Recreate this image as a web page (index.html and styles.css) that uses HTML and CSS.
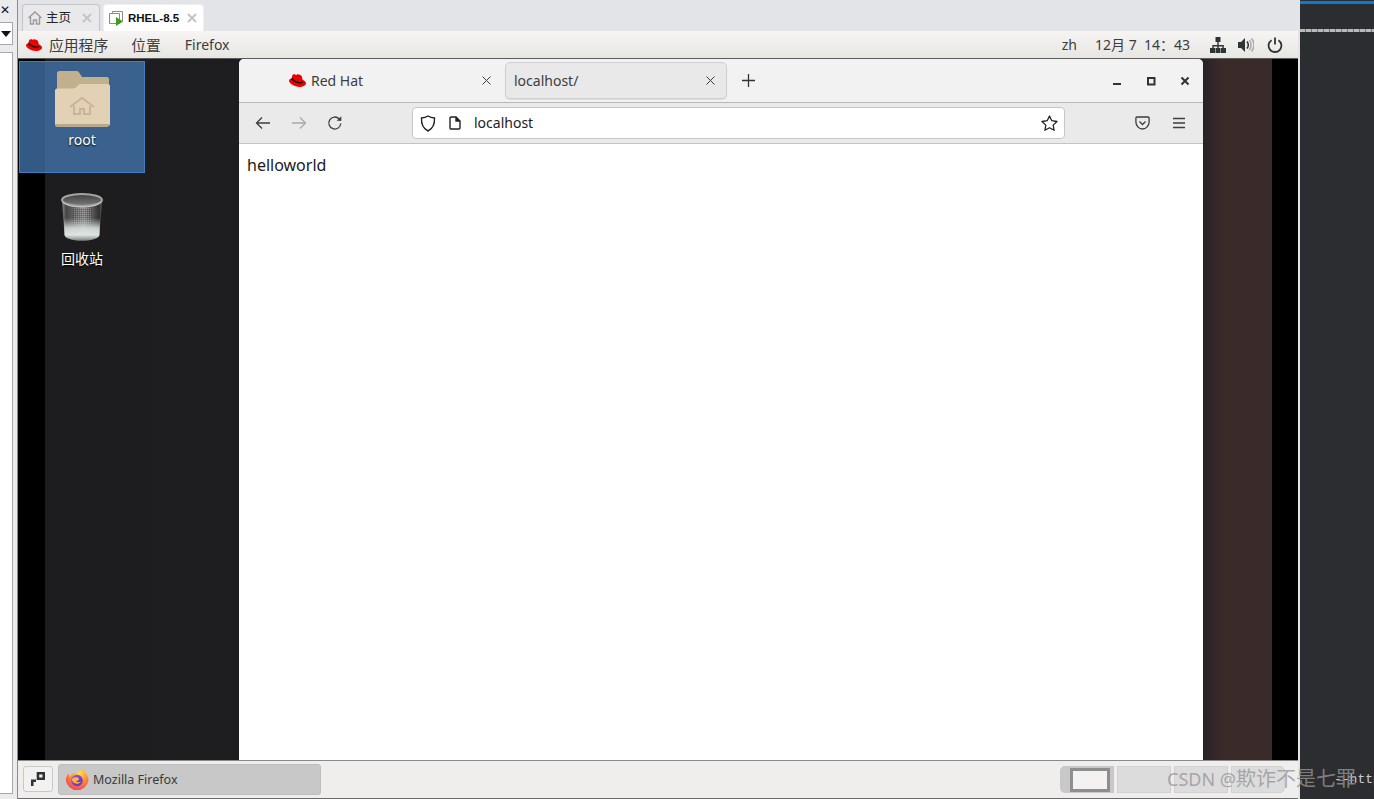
FILE: index.html
```html
<!DOCTYPE html>
<html lang="zh">
<head>
<meta charset="utf-8">
<title>RHEL-8.5</title>
<link rel="stylesheet" href="styles.css">
</head>
<body>
<div class="app">
  <aside class="left">
    <div class="left-close">✕</div>
    <div class="left-combo"><svg width="10" height="6" viewBox="0 0 10 6"><path d="M0 0h10L5 6z" fill="#111"/></svg></div>
    <div class="left-list"></div>
  </aside>

  <main class="vm">
    <div class="vm-tabs">
      <div class="vm-tab">
        <svg class="vm-tab-icon" width="16" height="16" viewBox="0 0 16 16" fill="none" stroke="#9a9a9a" stroke-width="1.4"><path d="M1.500 8 8 2l6.500 6M3.500 7v7h3v-4h3v4h3V7"/></svg>
        <span class="vm-tab-name">主页</span>
        <svg class="vm-tab-x" width="10" height="10" viewBox="0 0 10 10" stroke="#c4c4c4" stroke-width="2"><path d="M1 1l8 8M9 1l-8 8"/></svg>
      </div>
      <div class="vm-tab vm-tab-on">
        <svg class="vm-tab-icon" width="16" height="16" viewBox="0 0 16 16" fill="none"><path d="M4.500 3V1.500h10v10H13" stroke="#8a8a8a"/><path d="M1.500 3.500h10v10h-10z" stroke="#8a8a8a" fill="#fff"/><path d="M8 7l7 4.500-7 4.500z" fill="#3f9c1c"/></svg>
        <span class="vm-tab-name vm-tab-bold">RHEL-8.5</span>
        <svg class="vm-tab-x" width="10" height="10" viewBox="0 0 10 10" stroke="#c4c4c4" stroke-width="2"><path d="M1 1l8 8M9 1l-8 8"/></svg>
      </div>
    </div>

    <div class="guest">
      <header class="topbar">
        <svg class="hat" width="16" height="12" viewBox="0 0 16 12"><path d="M3 1.500C3.500.5 4.500 0 5.300.2c.7.2 1.300.6 1.700.6.500 0 .8-.6 1.300-.6 1.500.2 3.300 1 3.800 2l.7 3C14.500 6 16 7 16 8.500 16 10.500 13 12 10 12 5 12 0 8.700 0 6.300 0 5 1.300 4.500 2.500 4.200z" fill="#e00"/><path d="M2.700 3.400c1.500 2 5 4 8 4 1 0 2-.2 2.300-1l.4 1c-.6 1-1.700 1.400-3 1.400-3.500 0-7-2.200-8.300-4z" fill="#111"/></svg>
        <span class="top-item top-cjk top-first">应用程序</span>
        <span class="top-item top-cjk top-second">位置</span>
        <span class="top-item">Firefox</span>
        <span class="top-spacer"></span>
        <span class="top-item top-zh">zh</span>
        <span class="top-item top-clock">12月 7&nbsp; 14：43</span>
        <svg class="tray tray-net" width="16" height="16" viewBox="0 0 16 16" fill="#2e3436"><path d="M5.500 0h5v5h-5zM7.300 5h1.400v3h5.100v3h-1.400V9.400H8.700V11H7.300V9.400H3.700V11H2.300V8h5z"/><path d="M0 11h5v5H0zM5.500 11h5v5h-5zM11 11h5v5h-5z"/></svg>
        <svg class="tray tray-vol" width="16" height="16" viewBox="0 0 16 16"><path d="M0 5h3l4-4v14l-4-4H0z" fill="#2e3436"/><path d="M9 4.500c1.500 2 1.500 5 0 7" fill="none" stroke="#2e3436" stroke-width="1.500"/><path d="M11.300 3c2.200 3 2.200 7 0 10M13.600 1.500c3 4 3 9 0 13" fill="none" stroke="#a8a8a8" stroke-width="1.500"/></svg>
        <svg class="tray tray-pow" width="16" height="16" viewBox="0 0 16 16" fill="none" stroke="#2e3436" stroke-width="1.800"><path d="M4.600 3.200a6.400 6.400 0 1 0 6.800 0"/><path d="M8 .5v7"/></svg>
      </header>

      <section class="desktop">
        <div class="desk-icon desk-root">
          <svg width="56" height="58" viewBox="0 0 56 58">
            <path d="M3 3.500C3 2 4 1 5.500 1h17c1 0 2 .5 2.600 1.500L28 7h25c1 0 2 1 2 2v36H3z" fill="#c2b08d"/>
            <path d="M1 20.500c0-1 1-2 2-2h16c2 0 3-.7 4-2s2-2.500 4-2.500h27c1 0 2 1 2 2v38c0 1-1 2-2 2H3c-1 0-2-1-2-2z" fill="#e2d1b4"/>
            <path d="M1 54v1c0 1 1 2 2 2h50c1 0 2-1 2-2v-1z" fill="#b9a98c"/>
            <path d="M16 37l12-9 12 9M20 36v8h6v-5h4v5h6v-8" fill="none" stroke="#c8b596" stroke-width="2"/>
          </svg>
          <span class="desk-label">root</span>
        </div>
        <div class="desk-icon desk-trash">
          <svg width="44" height="50" viewBox="0 0 44 50">
            <defs>
              <linearGradient id="can" x1="0" y1="0" x2="1" y2="0"><stop offset="0" stop-color="#8a8a8a"/><stop offset=".1" stop-color="#454545"/><stop offset=".35" stop-color="#6c6c6c"/><stop offset=".55" stop-color="#8a8a8a"/><stop offset=".78" stop-color="#545454"/><stop offset=".93" stop-color="#2e2e2e"/><stop offset="1" stop-color="#6a6a6a"/></linearGradient>
              <linearGradient id="fill" x1="0" y1="0" x2="0" y2="1"><stop offset="0" stop-color="#c8d0cc" stop-opacity="0"/><stop offset=".45" stop-color="#d8dfdb" stop-opacity=".9"/><stop offset=".75" stop-color="#dfe6e2"/><stop offset="1" stop-color="#7f8582"/></linearGradient>
              <linearGradient id="rim" x1="0" y1="0" x2="0" y2="1"><stop offset="0" stop-color="#3e3e3e"/><stop offset="1" stop-color="#7c7c7c"/></linearGradient>
              <pattern id="mesh" width="2" height="2" patternUnits="userSpaceOnUse"><rect width="1" height="1" fill="#bdbdbd" fill-opacity=".35"/><rect x="1" y="1" width="1" height="1" fill="#222" fill-opacity=".35"/></pattern>
            </defs>
            <path d="M2 8 4.500 43c.3 3.500 8 5.500 17.500 5.500s17.200-2 17.500-5.500L42 8z" fill="url(#can)"/>
            <path d="M13 14h19v18H13z" fill="url(#mesh)"/>
            <path d="M3.800 26 4.500 43c.3 3.500 8 5.500 17.500 5.500s17.200-2 17.500-5.500l.7-17z" fill="url(#fill)"/>
            <ellipse cx="22" cy="8" rx="20" ry="6" fill="url(#rim)" stroke="#a4a4a4" stroke-width="2"/>
            <path d="M3 10c3 3.500 10 5 19 5s16-1.500 19-5" fill="none" stroke="#cfcfcf"/>
          </svg>
          <span class="desk-label">回收站</span>
        </div>

        <div class="browser">
          <div class="ff-tabs">
            <div class="ff-tab ff-tab-plain">
              <svg class="ff-hat" width="17" height="13" viewBox="0 0 16 12"><path d="M3 1.500C3.500.5 4.500 0 5.300.2c.7.2 1.300.6 1.700.6.500 0 .8-.6 1.300-.6 1.500.2 3.300 1 3.800 2l.7 3C14.500 6 16 7 16 8.500 16 10.500 13 12 10 12 5 12 0 8.700 0 6.300 0 5 1.300 4.500 2.500 4.200z" fill="#e00"/><path d="M2.700 3.400c1.500 2 5 4 8 4 1 0 2-.2 2.300-1l.4 1c-.6 1-1.700 1.400-3 1.400-3.500 0-7-2.200-8.300-4z" fill="#111"/></svg>
              <span class="ff-tab-name">Red Hat</span>
              <svg class="ff-x" width="9" height="9" viewBox="0 0 9 9" stroke="#3d3d3d"><path d="M.5.500l8 8M8.500.500l-8 8"/></svg>
            </div>
            <div class="ff-tab ff-tab-on">
              <span class="ff-tab-name">localhost/</span>
              <svg class="ff-x" width="9" height="9" viewBox="0 0 9 9" stroke="#3d3d3d"><path d="M.5.500l8 8M8.500.500l-8 8"/></svg>
            </div>
            <svg class="ff-plus" width="13" height="13" viewBox="0 0 13 13" stroke="#333" stroke-width="1.300"><path d="M6.500 0v13M0 6.500h13"/></svg>
            <span class="ff-spacer"></span>
            <svg class="wc wc-min" width="10" height="10" viewBox="0 0 10 10"><path d="M1 7h8v2H1z" fill="#2e3436"/></svg>
            <svg class="wc wc-max" width="10" height="10" viewBox="0 0 10 10" fill="none" stroke="#2e3436" stroke-width="2"><path d="M2 2h6.500v6.500H2z"/></svg>
            <svg class="wc wc-close" width="10" height="10" viewBox="0 0 10 10" stroke="#2e3436" stroke-width="2"><path d="M1.500 1.500l7 7M8.500 1.500l-7 7"/></svg>
          </div>
          <div class="ff-bar">
            <svg class="nav" width="16" height="14" viewBox="0 0 16 14" fill="none" stroke="#3d3d3d" stroke-width="1.300"><path d="M15 7H1.500M7 1.500 1.500 7 7 12.500"/></svg>
            <svg class="nav" width="16" height="14" viewBox="0 0 16 14" fill="none" stroke="#a9a9a9" stroke-width="1.300"><path d="M1 7h13.500M9 1.500 14.500 7 9 12.500"/></svg>
            <svg class="nav" width="16" height="16" viewBox="0 0 16 16" fill="none" stroke="#3d3d3d" stroke-width="1.300"><path d="M13.800 8.500a6 6 0 1 1-1.700-4.700l1.600 1.700"/><path d="M14.300 1.200v4.600H9.700z" fill="#3d3d3d" stroke="none"/></svg>
            <div class="url">
              <svg class="url-shield" width="16" height="17" viewBox="0 0 16 17" fill="none" stroke="#222" stroke-width="1.400"><path d="M8 1c2 1.200 4 1.800 6.500 2 .3 6-1.500 10.500-6.500 13C3 13.500 1.200 9 1.500 3 4 2.800 6 2.200 8 1z"/></svg>
              <svg class="url-page" width="12" height="14" viewBox="0 0 12 14" fill="none" stroke="#222" stroke-width="1.400"><path d="M1 2.200C1 1.500 1.500 1 2.200 1H7l4 4v6.800c0 .7-.5 1.200-1.200 1.200H2.200C1.500 13 1 12.500 1 11.800z"/><path d="M7 1v4h4" fill="#222"/></svg>
              <span class="url-text">localhost</span>
              <svg class="url-star" width="17" height="16" viewBox="0 0 17 16" fill="none" stroke="#222" stroke-width="1.300"><path d="M8.500 1l2.300 4.700 5.200.8-3.800 3.600.9 5.200-4.600-2.500-4.600 2.500.9-5.200L1 6.500l5.200-.8z" stroke-linejoin="round"/></svg>
            </div>
            <svg class="pocket" width="15" height="14" viewBox="0 0 15 14" fill="none" stroke="#3d3d3d" stroke-width="1.300"><path d="M1.800 1h11.400c.5 0 .9.400.9.900V6c0 3.800-3 7-6.600 7S.9 9.800.900 6V1.900c0-.5.400-.9.900-.9z"/><path d="M4.500 5.500l3 3 3-3"/></svg>
            <svg class="burger" width="14" height="12" viewBox="0 0 14 12" stroke="#3d3d3d" stroke-width="1.300"><path d="M1 1.500h12M1 6h12M1 10.500h12"/></svg>
          </div>
          <div class="ff-page">helloworld</div>
        </div>
      </section>

      <footer class="taskbar">
        <button class="show-desk"><svg width="16" height="16" viewBox="0 0 16 16" fill="#2e3436"><path d="M6.700 1H15v8H6.700zM9.200 3.500v3h3.300v-3z" fill-rule="evenodd"/><path d="M1 8.500h5v2.500H3.500v4H1z"/></svg></button>
        <div class="task-btn">
          <svg width="25" height="25" viewBox="0 0 24 24">
            <defs>
              <radialGradient id="ffo" cx=".6" cy=".25" r=".85"><stop offset="0" stop-color="#ffe14a"/><stop offset=".5" stop-color="#ff8a2a"/><stop offset="1" stop-color="#f0366a"/></radialGradient>
              <linearGradient id="ffp" x1="0" y1="0" x2="1" y2="1"><stop offset="0" stop-color="#9059ff"/><stop offset="1" stop-color="#5b2bc0"/></linearGradient>
            </defs>
            <path d="M15.500 0c.5 2.500 2 3.500 3.500 5 2.500 2.500 3.500 5 3.500 8A11 11 0 0 1 .8 13C.8 10 2 8 3.500 6.500c0 1.500.5 2.500 1.500 3C6 6.500 8.500 5.500 11 5.500c2.500 0 4.500-2 4.500-5.500z" fill="url(#ffo)"/>
            <circle cx="11.500" cy="13" r="5.500" fill="url(#ffp)"/>
            <path d="M6.500 12c1.500 5 7.500 5 9 2-1.500 1-4.500.8-5-.5 2.300 0 3-1.500 3-2.500-2-2-6-1.500-7 1z" fill="#ffb43a"/>
          </svg>
          <span class="task-name">Mozilla Firefox</span>
        </div>
        <span class="top-spacer"></span>
        <div class="pager">
          <div class="ws ws-on"><span class="ws-win"></span></div>
          <div class="ws"></div>
          <div class="ws"></div>
          <div class="ws ws-last"></div>
        </div>
      </footer>
    </div>
  </main>

  <aside class="right">
    <div class="right-rule"></div>
    <div class="right-dash"></div>
    <div class="right-spacer"></div>
    <div class="right-code">--http</div>
  </aside>
  <div class="watermark">CSDN @<span class="watermark-cjk">欺诈不是七罪</span></div>
</div>
</body>
</html>
```

FILE: styles.css
```css
* { box-sizing: border-box; }
html, body { margin: 0; padding: 0; height: 100%; overflow: hidden; }
body { background: #e9e9ec; font-family: "Noto Sans", "Noto Sans CJK SC", sans-serif; }
svg { display: block; flex: none; }

.app { position: relative; display: flex; width: 1374px; height: 799px; }

/* left strip */
.left { width: 18px; flex: none; display: flex; flex-direction: column; background: #ebebee; border-right: 1px solid #8b8b8b; }
.left-close { height: 22px; width: 13px; padding: 1px 0 0 0; font: 12px/18px "DejaVu Sans", sans-serif; color: #111; overflow: hidden; }
.left-combo { width: 13px; height: 23px; background: #fff; border: 1px solid #a8a8ae; border-left: 0; display: flex; align-items: center; justify-content: flex-end; padding-right: 1px; }
.left-list { width: 13px; height: 742px; margin-top: 7px; background: #fff; border: 1px solid #a8a8ae; border-left: 0; }

/* vm tabs */
.vm { width: 1282px; flex: none; display: flex; flex-direction: column; background: #e3e4e7; }
.vm-tabs { height: 31px; flex: none; display: flex; align-items: flex-end; gap: 3px; padding-left: 4px; }
.vm-tab { width: 78px; height: 27px; display: flex; align-items: center; padding: 0 7px 0 4px; background: #e9e9eb; border: 1px solid #c4c4c8; border-bottom: 0; border-radius: 4px 4px 0 0; }
.vm-tab-on { width: 101px; padding-right: 6px; background: #fff; border-color: #f0f0f0; }
.vm-tab-icon { margin-right: 3px; }
.vm-tab-name { flex: 1; font-size: 12.500px; line-height: 18px; color: #222; white-space: nowrap; }
.vm-tab-bold { font-family: "Liberation Sans", sans-serif; font-size: 11.500px; font-weight: 700; color: #111; margin-left: 1px; }

/* guest */
.guest { width: 1280px; flex: 1; display: flex; flex-direction: column; min-height: 0; }
.topbar { height: 28px; flex: none; display: flex; align-items: center; padding: 1px 15px 0 8px; background: linear-gradient(#f6f5f3, #e8e6e3); border-bottom: 1px solid #5c5c5c; color: #3c3c3c; font-size: 14px; }
.top-item { line-height: 20px; white-space: nowrap; margin-right: 23px; }
.top-cjk { font-size: 14.800px; }
.top-first { margin-left: 7px; }
.top-second { margin-right: 24px; }
.top-spacer { flex: 1; }
.top-zh { margin-right: 18px; }
.top-clock { margin-right: 20px; }
.tray-net { margin-right: 12px; }
.tray-vol { margin-right: 13px; }

/* desktop */
.desktop { position: relative; flex: 1; min-height: 0; background: linear-gradient(90deg, #000 27px, #1d1d20 27px, #1f1f21 900px, #282224 1185px, #3a2a2a 1204px, #3b2a2a 1254px, #000 1254px); }
.desk-icon { position: absolute; width: 126px; display: flex; flex-direction: column; align-items: center; }
.desk-root { left: 1px; top: 2px; height: 112px; padding-top: 8px; background: rgba(70, 125, 185, .72); border: 1px solid #3f7cc0; }
.desk-trash { left: 1px; top: 133px; }
.desk-label { margin-top: 2px; font-size: 14px; line-height: 20px; color: #fff; text-shadow: 0 1px 2px #000; }
.desk-trash .desk-label { margin-top: 7px; }

/* firefox */
.browser { position: absolute; left: 221px; top: 0; width: 964px; height: 701px; display: flex; flex-direction: column; background: #fff; border-radius: 5px 5px 0 0; overflow: hidden; }
.ff-tabs { height: 44px; flex: none; display: flex; align-items: center; background: #f2f2f2; border-bottom: 1px solid #b9b9b9; padding-left: 1px; font-size: 14px; color: #3d3d3d; }
.ff-tab { height: 37px; width: 222px; display: flex; align-items: center; border: 1px solid transparent; border-radius: 5px; }
.ff-tab-plain { width: 265px; padding-left: 48px; }
.ff-tab-on { background: #e9e9e9; border-color: #cfcfcf; box-shadow: 0 1px 1px rgba(0,0,0,.1); padding-left: 8px; }
.ff-hat { margin-right: 5px; }
.ff-tab-name { flex: 1; line-height: 20px; white-space: nowrap; }
.ff-x { margin-right: 11px; }
.ff-tab-plain .ff-x { margin-right: 13px; }
.ff-plus { margin-left: 15px; }
.ff-spacer { flex: 1; }
.wc { margin-left: 24px; }
.wc-close { margin-right: 13px; }

.ff-bar { height: 41px; flex: none; display: flex; align-items: center; padding: 0 17px 0 16px; background: #eaeaea; border-bottom: 1px solid #c4c4c4; }
.nav { margin-right: 20px; }
.url { width: 655px; height: 32px; margin-left: 49px; display: flex; align-items: center; padding: 0 6px 0 7px; background: #fff; border: 1px solid #c6c6c6; border-radius: 4px; font-size: 14px; color: #1c1c1c; }
.url-shield { margin-right: 13px; }
.url-page { margin-right: 13px; }
.url-text { flex: 1; line-height: 20px; }
.pocket { margin-left: 70px; }
.burger { margin-left: 22px; }
.ff-page { flex: 1; padding: 10px 8px; font-size: 16px; line-height: 22px; color: #1a1a1a; }

/* taskbar */
.taskbar { height: 39px; flex: none; display: flex; align-items: center; padding: 0 13px 1px 5px; background: #efeeec; border-top: 1px solid #8a8a8a; border-bottom: 1px solid #6a6a6a; }
.show-desk { width: 30px; height: 26px; display: flex; align-items: center; justify-content: center; padding: 0; background: #f2f1ef; border: 1px solid #c8c8c8; border-radius: 3px; }
.task-btn { width: 263px; height: 31px; margin-left: 5px; display: flex; align-items: center; padding-left: 6px; background: #c8c8c8; border: 1px solid #bdbdbd; border-radius: 3px; }
.task-name { margin-left: 3px; padding-top: 2px; font-size: 12.500px; line-height: 18px; color: #3a3a3a; }
.pager { display: flex; gap: 3px; height: 27px; }
.ws { width: 54px; background: #dcdcdc; border: 1px solid #d2d2d2; }
.ws-on { background: #c8c8c8; border: 0; border-radius: 5px 0 0 5px; padding: 2px 4px 0 10px; }
.ws-last { border-radius: 0 5px 5px 0; }
.ws-win { display: block; width: 40px; height: 24px; background: #f3f2f0; border: 3px solid #8e8e8e; }

/* right panel */
.right { width: 74px; flex: none; display: flex; flex-direction: column; background: #2b2d30; overflow: hidden; }
.right-rule { height: 3px; margin-top: 1px; background: #0a7ad6; }
.right-dash { height: 3px; margin-top: 25px; background: repeating-linear-gradient(90deg, #b9b9b9 0 5px, #6a7280 5px 6px); }
.right-spacer { flex: 1; }
.right-code { height: 28px; padding-left: 34px; font: 13px/18px "Liberation Mono", monospace; color: #c8ccd0; white-space: nowrap; }

.watermark { position: absolute; left: 1167px; top: 766px; font-size: 18px; line-height: 26px; color: rgba(150, 150, 150, .8); white-space: nowrap; }
.watermark-cjk { font-size: 20px; }
```
